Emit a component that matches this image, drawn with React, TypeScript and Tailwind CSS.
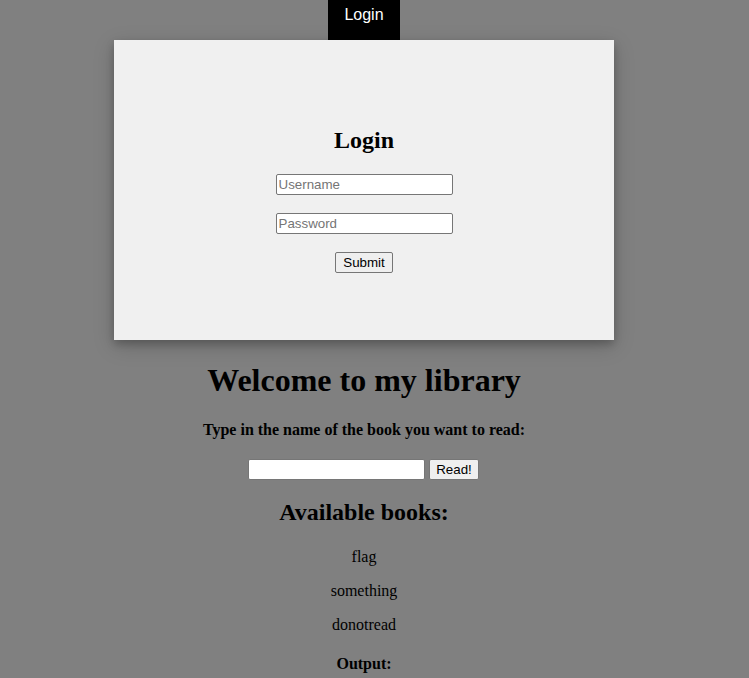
import React from "react";

export default function App() {
  const serif = { fontFamily: '"Liberation Serif", "Times New Roman", serif' };
  return (
    <div className="min-h-[678px] w-full bg-[#808080] text-black" style={serif}>
      <div className="w-[728px] flex flex-col items-center">
        <button
          className="w-[72px] h-[40px] bg-black text-white text-[16px] leading-[18px] flex items-start justify-center pt-[6px] font-['Liberation_Sans',Arial,sans-serif]"
        >
          Login
        </button>
        <div className="w-[500px] h-[300px] bg-[#f0f0f0] shadow-[0_4px_8px_0_rgba(0,0,0,0.2),0_6px_20px_0_rgba(0,0,0,0.19)] flex flex-col items-center justify-center">
          <h2 className="text-[24px] font-bold leading-[27px] my-[20px]">Login</h2>
          <input
            placeholder="Username"
            className="w-[177px] h-[21px] bg-white border border-[#767676] rounded-[2px] px-[2px] text-[13.33px] placeholder:text-[#757575] font-['Liberation_Sans',Arial,sans-serif] outline-none"
          />
          <input
            placeholder="Password"
            className="mt-[18px] w-[177px] h-[21px] bg-white border border-[#767676] rounded-[2px] px-[2px] text-[13.33px] placeholder:text-[#757575] font-['Liberation_Sans',Arial,sans-serif] outline-none"
          />
          <button className="mt-[18px] w-[58px] h-[21px] bg-[#efefef] border border-[#767676] rounded-[2px] text-[13.33px] leading-[15px] font-['Liberation_Sans',Arial,sans-serif]">
            Submit
          </button>
        </div>
        <h1 className="text-[32px] font-bold leading-[37px] mt-[22px]">Welcome to my library</h1>
        <h4 className="text-[16px] font-bold leading-[18px] mt-[22px]">
          Type in the name of the book you want to read:
        </h4>
        <div className="mt-[20px] ml-[-1px] flex items-center gap-[4px]">
          <input className="w-[177px] h-[21px] bg-white border border-[#767676] rounded-[2px] px-[2px] text-[13.33px] font-['Liberation_Sans',Arial,sans-serif] outline-none" />
          <button className="w-[50px] h-[21px] bg-[#efefef] border border-[#767676] rounded-[2px] text-[13.33px] leading-[15px] font-['Liberation_Sans',Arial,sans-serif]">
            Read!
          </button>
        </div>
        <h2 className="text-[24px] font-bold leading-[27px] mt-[19px]">Available books:</h2>
        <p className="text-[16px] leading-[18px] mt-[22px]">flag</p>
        <p className="text-[16px] leading-[18px] mt-[16px]">something</p>
        <p className="text-[16px] leading-[18px] mt-[16px]">donotread</p>
        <h4 className="text-[16px] font-bold leading-[18px] mt-[21px] mb-[21px]">Output:</h4>
      </div>
    </div>
  );
}
